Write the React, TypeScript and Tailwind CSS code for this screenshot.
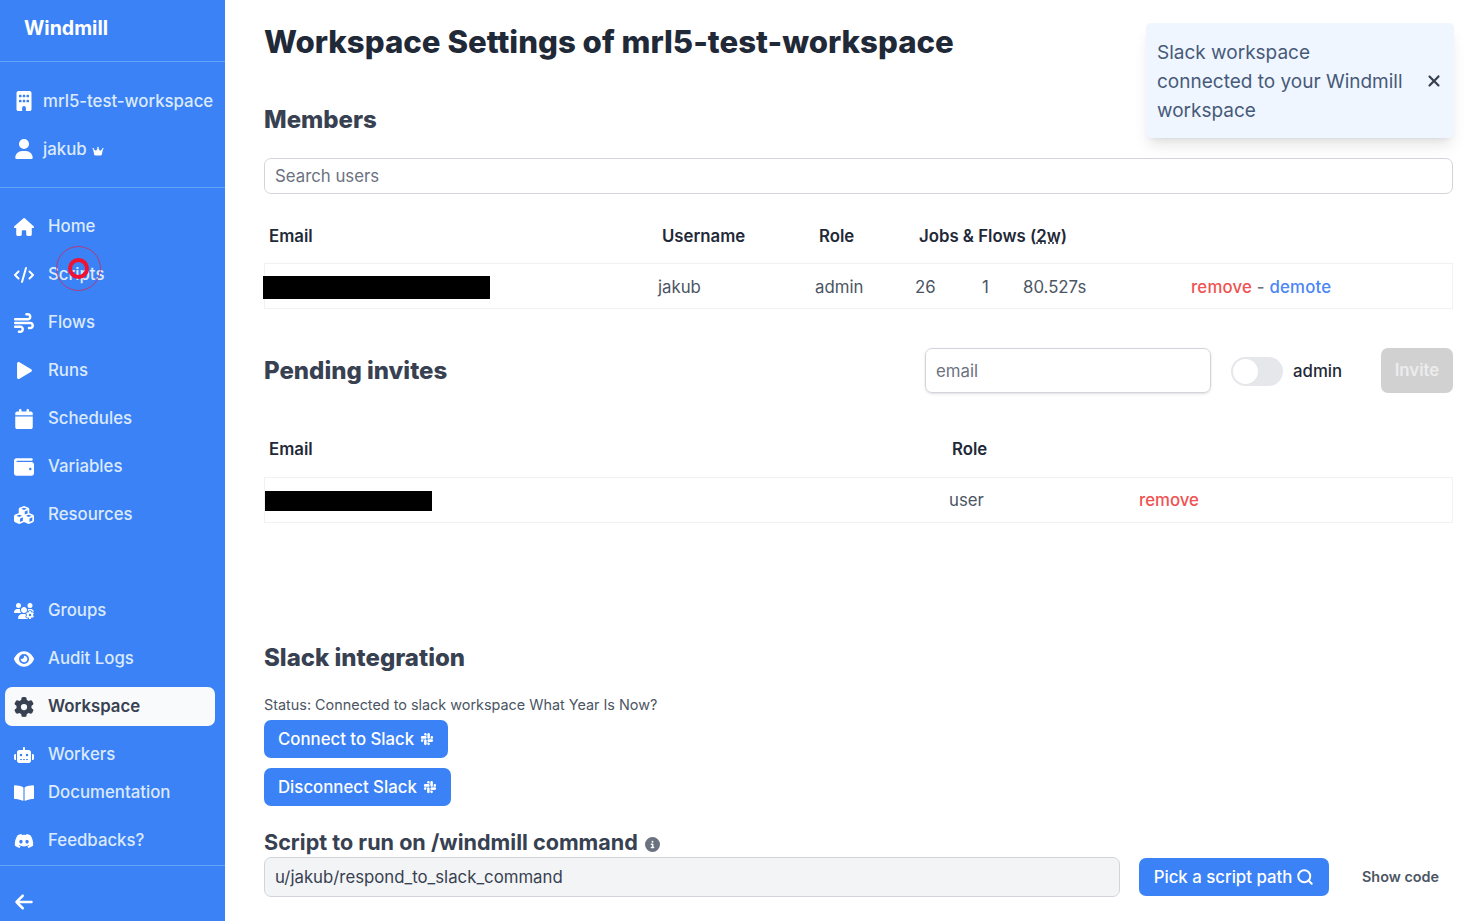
import React from "react";
import {
  FaBuilding, FaUser, FaCrown, FaHouse, FaCode, FaWind, FaCalendar, FaWallet, FaCubes,
  FaUsersGear, FaEye, FaGear, FaRobot, FaDiscord, FaArrowLeft, FaSlack, FaCircleInfo, FaXmark,
} from "react-icons/fa6";
import { FaPlay, FaBookOpen } from "react-icons/fa";
import { Search } from "lucide-react";

type NavItem = { label: string; icon: React.ComponentType<{ className?: string }>; iconClass?: string };

function Nav({ item, active }: { item: NavItem; active?: boolean }) {
  const Icon = item.icon;
  return (
    <div className={active
      ? "flex h-[39px] items-center rounded-[7px] bg-[#f9fafb] pl-[9px] text-[#374151] font-semibold mr-[10px]"
      : "flex h-[39px] items-center pl-[9px] text-[#dbeafe] font-medium mr-[10px]"}>
      <span className="flex w-[20px] justify-center">
        <Icon className={item.iconClass ?? (active ? "w-[20px] h-[20px] text-[#374151]" : "w-[20px] h-[20px] text-white")} />
      </span>
      <span className="ml-[14px] text-[16.8px] leading-none">{item.label}</span>
    </div>
  );
}

function Sidebar() {
  const first: NavItem[] = [
    { label: "Home", icon: FaHouse },
    { label: "Scripts", icon: FaCode },
    { label: "Flows", icon: FaWind },
    { label: "Runs", icon: FaPlay, iconClass: "w-[15px] h-[17px] text-white" },
    { label: "Schedules", icon: FaCalendar, iconClass: "w-[18px] h-[20px] text-white" },
    { label: "Variables", icon: FaWallet },
    { label: "Resources", icon: FaCubes },
  ];
  const second: NavItem[] = [
    { label: "Groups", icon: FaUsersGear },
    { label: "Audit Logs", icon: FaEye },
  ];
  return (
    <aside className="relative flex h-[921px] w-[225px] shrink-0 flex-col bg-[#3b82f6]">
      <div className="flex h-[62px] items-center border-b border-[#60a5fa] pl-[24px] pb-[4px]">
        <span className="text-[19.6px] font-bold text-white leading-none">Windmill</span>
      </div>
      <div className="flex h-[126px] flex-col border-b border-[#60a5fa] pl-[15px] pt-[15px]">
        <div className="flex h-[48px] items-center text-[#dbeafe]">
          <FaBuilding className="w-[18px] h-[20px] text-white" />
          <span className="ml-[10px] text-[16.8px] font-medium leading-none whitespace-nowrap">mrl5-test-workspace</span>
        </div>
        <div className="flex h-[48px] items-center text-[#dbeafe]">
          <FaUser className="w-[18px] h-[20px] text-white" />
          <span className="ml-[10px] text-[16.8px] font-medium leading-none">jakub</span>
          <FaCrown className="ml-[5px] mt-[3px] w-[12px] h-[10px] text-white" />
        </div>
      </div>
      <div className="flex flex-col gap-[9px] pl-[5px] pt-[19px]">
        {first.map((n) => <Nav key={n.label} item={n} />)}
      </div>
      <div className="flex flex-col gap-[9px] pl-[5px] pt-[57px]">
        {second.map((n) => <Nav key={n.label} item={n} />)}
        <Nav item={{ label: "Workspace", icon: FaGear }} active />
        <Nav item={{ label: "Workers", icon: FaRobot }} />
      </div>
      <div className="-mt-px flex flex-col pl-[5px]">
        <Nav item={{ label: "Documentation", icon: FaBookOpen }} />
        <div className="mt-[9px]"><Nav item={{ label: "Feedbacks?", icon: FaDiscord }} /></div>
      </div>
      <div className="mt-[5px] flex-1 border-t border-[#60a5fa] pl-[14px] pt-[26px]">
        <FaArrowLeft className="w-[20px] h-[20px] text-white" />
      </div>
      <div className="absolute left-[56px] top-[246px] flex h-[45px] w-[45px] items-center justify-center rounded-full border border-[#e11d48]/70">
        <div className="h-[21px] w-[21px] rounded-full border-[4px] border-[#ef1233]" />
      </div>
    </aside>
  );
}

function Main() {
  const heading = "text-[24px] font-extrabold text-[#374151] leading-none whitespace-nowrap";
  const th = "text-[16.8px] font-semibold text-[#1f2937] leading-none";
  const td = "text-[16.8px] text-[#4b5563] leading-none";
  const link = "text-[16.8px] font-medium leading-none";
  const btn = "flex h-[38px] items-center rounded-[7px] bg-[#3b82f6] text-white text-[16.8px] font-medium leading-none";
  return (
    <main className="relative flex h-[921px] flex-1 flex-col overflow-hidden bg-white pl-[39px] pr-[18px]">
      <div className="mt-[23px] flex h-[40px] items-center">
        <h1 className="text-[31.2px] font-extrabold text-[#1f2937] leading-none whitespace-nowrap">Workspace Settings of mrl5-test-workspace</h1>
      </div>
      <div className="mt-[40px] flex h-[34px] items-center"><h2 className={heading}>Members</h2></div>
      <div className="mt-[21px] flex h-[36px] items-center rounded-[7px] border border-[#d1d5db] px-[10px] pt-[2px] text-[16.8px] text-[#6b7280]">Search users</div>

      <div className="mt-[22px] flex h-[40px] items-center pl-[5px]">
        <span className={`${th} w-[393px]`}>Email</span>
        <span className={`${th} w-[157px]`}>Username</span>
        <span className={`${th} w-[100px]`}>Role</span>
        <span className={th}>Jobs &amp; Flows (<span className="underline decoration-dotted">2w</span>)</span>
      </div>
      <div className="mt-[7px] flex h-[46px] items-center border border-[#f0f1f3] pt-[3px]">
        <div className="-ml-[2px] w-[395px]"><div className="h-[23px] w-[227px] bg-black" /></div>
        <span className={`${td} w-[157px]`}>jakub</span>
        <span className={`${td} w-[100px]`}>admin</span>
        <span className={`${td} w-[67px]`}>26</span>
        <span className={`${td} w-[41px]`}>1</span>
        <span className={`${td} w-[168px]`}>80.527s</span>
        <span className={`${link} whitespace-nowrap tracking-[0.2px]`}>
          <span className="text-[#f05252]">remove</span>
          <span className="text-[#6b7280]"> - </span>
          <span className="text-[#4b86f5]">demote</span>
        </span>
      </div>

      <div className="mt-[39px] flex h-[45px] items-center">
        <h2 className={`${heading} w-[661px]`}>Pending invites</h2>
        <div className="flex h-[45px] w-[286px] items-center rounded-[7px] border border-[#d1d5db] px-[10px] pt-[2px] text-[16.8px] text-[#6b7280] shadow-sm">email</div>
        <div className="ml-[20px] mt-[1px] flex h-[29px] w-[52px] items-center rounded-full bg-[#e5e7eb] pl-[2px]">
          <div className="h-[25px] w-[25px] rounded-full bg-white" />
        </div>
        <span className="ml-[10px] mt-[2px] text-[16.8px] font-medium leading-none text-[#1f2937]">admin</span>
        <div className="ml-auto flex h-[45px] w-[72px] items-center justify-center rounded-[7px] bg-[#d1d1d1] text-[16.8px] font-semibold text-white/60">Invite</div>
      </div>

      <div className="mt-[36px] flex h-[40px] items-center pl-[5px]">
        <span className={`${th} w-[683px]`}>Email</span>
        <span className={th}>Role</span>
      </div>
      <div className="mt-[8px] flex h-[46px] items-center border border-[#f0f1f3] pt-[1px]">
        <div className="w-[684px]"><div className="h-[20px] w-[167px] bg-black" /></div>
        <span className={`${td} w-[190px]`}>user</span>
        <span className={`${link} text-[#f05252]`}>remove</span>
      </div>

      <div className="mt-[118px] flex h-[34px] items-center"><h2 className={heading}>Slack integration</h2></div>
      <div className="mt-[20px] flex h-[20px] items-center text-[14.4px] text-[#4b5563]">Status: Connected to slack workspace What Year Is Now?</div>
      <div className={`${btn} mt-[5px] w-fit px-[14px]`}>Connect to Slack<FaSlack className="ml-[6px] w-[14px] h-[14px]" /></div>
      <div className={`${btn} mt-[10px] w-fit px-[14px]`}>Disconnect Slack<FaSlack className="ml-[6px] w-[14px] h-[14px]" /></div>

      <div className="mt-[23px] flex h-[28px] items-center">
        <span className="text-[21.6px] font-bold text-[#374151] leading-none whitespace-nowrap">Script to run on /windmill command</span>
        <FaCircleInfo className="ml-[7px] mt-[3px] w-[15px] h-[15px] text-[#6b7280]" />
      </div>
      <div className="flex h-[40px] items-center">
        <div className="flex h-[40px] w-[856px] items-center rounded-[7px] border border-[#d1d5db] bg-[#f3f4f6] px-[10px] pt-[2px] text-[16.8px] text-[#374151]">u/jakub/respond_to_slack_command</div>
        <div className={`${btn} ml-[19px] w-[190px] justify-center`}>Pick a script path<Search className="ml-[4px] h-[18px] w-[18px]" strokeWidth={2.6} /></div>
        <span className="ml-[33px] text-[14.4px] font-semibold text-[#4b5563] whitespace-nowrap">Show code</span>
      </div>

      <div className="absolute right-[17px] top-[23px] flex h-[115px] w-[308px] items-center rounded-[5px] bg-[#eff6ff] pl-[11px] shadow-lg">
        <p className="w-[252px] pt-[1px] text-[19px] leading-[29px] text-[#475a78]">Slack workspace connected to your Windmill workspace</p>
        <FaXmark className="ml-[16px] w-[18px] h-[18px] text-[#374151]" />
      </div>
    </main>
  );
}

export default function App() {
  return (
    <div className="flex h-[921px] w-[1471px] overflow-hidden bg-white [font-family:Inter,'Liberation_Sans',sans-serif]">
      <Sidebar />
      <Main />
    </div>
  );
}
